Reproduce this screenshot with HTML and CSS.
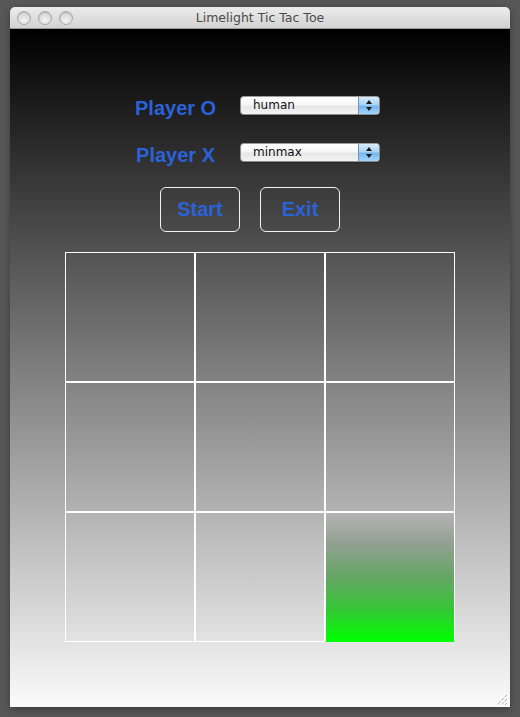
FILE: index.html
```html
<!DOCTYPE html>
<html>
<head>
<meta charset="utf-8">
<title>Limelight Tic Tac Toe</title>
<link rel="stylesheet" href="styles.css">
</head>
<body>
<div class="window">
  <div class="titlebar">
    <div class="lights">
      <span class="light"></span><span class="light"></span><span class="light"></span>
    </div>
    <div class="title">Limelight Tic Tac Toe</div>
  </div>
  <div class="content">
    <div class="form">
      <div class="label">Player O</div>
      <div class="select"><span class="value">human</span><span class="stepper"><span class="up"></span><span class="down"></span></span></div>
      <div class="label">Player X</div>
      <div class="select"><span class="value">minmax</span><span class="stepper"><span class="up"></span><span class="down"></span></span></div>
    </div>
    <div class="buttons">
      <div class="btn">Start</div>
      <div class="btn">Exit</div>
    </div>
    <div class="board">
      <div class="cell"></div><div class="cell"></div><div class="cell"></div>
      <div class="cell"></div><div class="cell"></div><div class="cell"></div>
      <div class="cell"></div><div class="cell"></div><div class="cell win"></div>
    </div>
    <svg class="grip" width="12" height="12" viewBox="0 0 12 12">
      <path d="M11 1 L1 11 M11 5 L5 11 M11 9 L9 11" stroke="#8a8a8a" stroke-width="1" stroke-dasharray="1 1" fill="none"/>
    </svg>
  </div>
</div>
</body>
</html>
```
FILE: styles.css
```css
html, body {
  margin: 0;
  padding: 0;
}
body {
  background: #585858;
  width: 520px;
  height: 717px;
  padding: 7px 10px 0 10px;
  box-sizing: border-box;
  font-family: "Liberation Sans", Arial, sans-serif;
}
.window {
  width: 500px;
  height: 700px;
  border-radius: 5px 5px 0 0;
  overflow: hidden;
  box-shadow: 0 2px 8px rgba(0,0,0,0.35);
  display: flex;
  flex-direction: column;
}
.titlebar {
  height: 22px;
  flex: none;
  background: linear-gradient(to bottom, #ececec 0%, #dcdcdc 60%, #d2d2d2 100%);
  border-bottom: 1px solid #9a9a9a;
  box-sizing: border-box;
  display: flex;
  align-items: center;
  position: relative;
}
.lights {
  display: flex;
  gap: 7px;
  padding-left: 7px;
  position: relative;
  z-index: 1;
}
.light {
  width: 14px;
  height: 14px;
  border-radius: 50%;
  box-sizing: border-box;
  border: 1px solid #a8a8a8;
  background: radial-gradient(circle at 50% 70%, #f4f4f4 0%, #dedede 50%, #c9c9c9 100%);
  box-shadow: inset 0 1px 1px rgba(0,0,0,0.12);
}
.title {
  position: absolute;
  left: 0;
  right: 0;
  top: 0;
  line-height: 22px;
  text-align: center;
  font-family: "DejaVu Sans", sans-serif;
  font-size: 12.5px;
  color: #4b4b4b;
}
.content {
  flex: 1;
  position: relative;
  background: linear-gradient(to bottom, #000000 0%, #fbfbfb 100%);
  display: flex;
  flex-direction: column;
}
.form {
  display: grid;
  grid-template-columns: 80px 140px;
  grid-auto-rows: 20px;
  column-gap: 25px;
  row-gap: 27px;
  padding-left: 125px;
  margin-top: 67px;
}
.label {
  font-weight: bold;
  font-size: 20px;
  line-height: 20px;
  padding-top: 2px;
  color: #2b62d8;
  white-space: nowrap;
  text-align: right;
}
.select {
  height: 19px;
  box-sizing: border-box;
  border: 1px solid #8c8c8c;
  border-top-color: #9c9c9c;
  border-radius: 4px;
  background: linear-gradient(to bottom, #ffffff 0%, #f6f6f6 45%, #e7e7e7 55%, #f3f3f3 100%);
  display: flex;
  overflow: hidden;
  box-shadow: 0 1px 1px rgba(0,0,0,0.2);
}
.value {
  flex: 1;
  font-family: "DejaVu Sans", sans-serif;
  font-size: 12px;
  line-height: 17px;
  padding-left: 12px;
  color: #111;
}
.stepper {
  width: 20px;
  border-left: 1px solid #6f93bd;
  background: linear-gradient(to bottom, #d9ecfc 0%, #a9d2f6 45%, #74b6ef 55%, #a5d6fb 100%);
  display: flex;
  flex-direction: column;
  align-items: center;
  justify-content: center;
  gap: 3px;
}
.up {
  width: 0;
  height: 0;
  border-left: 3px solid transparent;
  border-right: 3px solid transparent;
  border-bottom: 4px solid #1a1a1a;
}
.down {
  width: 0;
  height: 0;
  border-left: 3px solid transparent;
  border-right: 3px solid transparent;
  border-top: 4px solid #1a1a1a;
}
.buttons {
  display: flex;
  gap: 20px;
  padding-left: 150px;
  margin-top: 24px;
}
.btn {
  width: 80px;
  height: 45px;
  box-sizing: border-box;
  border: 1px solid #f2f2f2;
  border-radius: 6px;
  color: #2b62d8;
  font-weight: bold;
  font-size: 20px;
  display: flex;
  align-items: center;
  justify-content: center;
}
.board {
  display: grid;
  grid-template-columns: repeat(3, 130px);
  grid-template-rows: repeat(3, 130px);
  margin: 20px 0 0 55px;
  width: 390px;
}
.cell {
  border: 1px solid #fff;
}
.cell.win {
  border-bottom-color: #00ff00;
  background: linear-gradient(to bottom,
    rgba(0,0,0,0) 0%,
    rgba(0,64,0,0.25) 25%,
    rgba(0,128,0,0.5) 50%,
    rgba(0,191,0,0.75) 75%,
    rgba(0,255,0,1) 100%);
}
.grip {
  position: absolute;
  right: 2px;
  bottom: 1px;
}
```
